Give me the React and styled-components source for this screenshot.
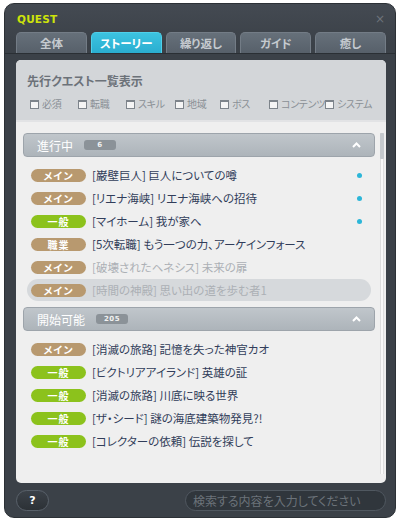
import React from "react";
import styled, { createGlobalStyle } from "styled-components";

const Global = createGlobalStyle`
  html, body { margin: 0; padding: 0; background: #ffffff; }
  body {
    font-family: "Noto Sans CJK JP", "Noto Sans", sans-serif;
    font-feature-settings: "palt";
  }
  * { box-sizing: border-box; }
`;

const Window = styled.div`
  margin: 3px 0 0 4px;
  width: 392px;
  height: 515px;
  border-radius: 10px;
  background: linear-gradient(#444a52, #3b4148 40px, #3b4148);
  border: 1px solid #2c3136;
  display: flex;
  flex-direction: column;
  overflow: hidden;
`;

const TitleBar = styled.div`
  height: 28px;
  display: flex;
  align-items: center;
  justify-content: space-between;
  padding: 2px 10px 0 12px;
`;

const Title = styled.div`
  font-family: "DejaVu Sans", Verdana, sans-serif;
  font-weight: bold;
  font-size: 10.5px;
  color: #cde30a;
  letter-spacing: 0.2px;
`;

const Close = styled.div`
  font-family: "DejaVu Sans", sans-serif;
  font-size: 12px;
  color: #6e747b;
  line-height: 1;
`;

const Tabs = styled.div`
  display: flex;
  gap: 4px;
  padding: 0 9px 0 11px;
  height: 22px;
  border-bottom: 1px solid #2a2f34;
`;

const Tab = styled.div`
  flex: 1;
  height: 21px;
  border-radius: 5px 5px 0 0;
  display: flex;
  align-items: center;
  justify-content: center;
  font-size: 11.5px;
  font-weight: bold;
  color: ${(p) => (p.$active ? "#ffffff" : "#c5cacf")};
  background: ${(p) =>
    p.$active
      ? "linear-gradient(#3cc3e0, #2aaed0)"
      : "linear-gradient(#66707a, #57606a)"};
  border: 1px solid ${(p) => (p.$active ? "#4fd0ea" : "#737c86")};
  border-bottom: none;
`;

const Panel = styled.div`
  margin: 6px 9px 0 11px;
  height: 423px;
  border-radius: 5px;
  overflow: hidden;
  display: flex;
  flex-direction: column;
  background: #efefef;
`;

const Filter = styled.div`
  height: 62px;
  background: #d3d6d9;
  padding: 13px 0 0 11px;
  border-bottom: 2px solid #e2e3e5;
`;

const FilterTitle = styled.div`
  font-size: 12px;
  font-weight: bold;
  color: #6c7279;
  line-height: 16px;
`;

const Checks = styled.div`
  display: flex;
  margin-top: 8px;
  padding-left: 3px;
`;

const CheckItem = styled.label`
  width: ${(p) => p.$w}px;
  flex: none;
  display: flex;
  align-items: center;
  gap: 3px;
  font-size: 10px;
  letter-spacing: -0.3px;
  color: #8a9096;
  line-height: 14px;
  white-space: nowrap;
`;

const Box = styled.span`
  width: 9px;
  height: 9px;
  flex: none;
  border: 1px solid #7d848b;
  border-top-width: 2px;
  background: #f5f5f5;
`;

const List = styled.div`
  flex: 1;
  display: flex;
  min-height: 0;
`;

const ListContent = styled.div`
  flex: 1;
  padding: 11px 0 0 7px;
  overflow: hidden;
`;

const Track = styled.div`
  width: 4px;
  margin: 11px 2px 9px 5px;
  background: #f9f9f9;
  border-left: 1px solid #dedede;
  border-right: 1px solid #dedede;
  position: relative;
`;

const Thumb = styled.div`
  position: absolute;
  left: -1px;
  right: -1px;
  top: 0;
  height: 26px;
  background: #c5c9cd;
  border-radius: 1px;
`;

const SectionHeader = styled.div`
  height: 24px;
  margin: ${(p) => (p.$first ? "0" : "6px")} 0 7px 0;
  border-radius: 4px;
  border: 1px solid #9da4ab;
  background: linear-gradient(#c0c6cb, #adb4ba);
  display: flex;
  align-items: center;
  gap: 11px;
  padding: 0 13px 0 13px;
`;

const SectionName = styled.span`
  font-size: 12px;
  color: #ffffff;
  white-space: nowrap;
`;

const Badge = styled.span`
  width: 32px;
  height: 10px;
  border-radius: 3px;
  background: #8b9298;
  color: #f2f2f2;
  font-family: "DejaVu Sans", sans-serif;
  font-weight: bold;
  font-size: 7px;
  line-height: 10px;
  text-align: center;
  letter-spacing: 0.5px;
`;

const Chevron = styled.svg`
  margin-left: auto;
`;

const Row = styled.div`
  height: 22px;
  margin: 1px 4px;
  border-radius: 11px;
  background: ${(p) => (p.$hl ? "#d6d9dc" : "transparent")};
  display: flex;
  align-items: center;
  padding: 0 9px 0 4px;
`;

const Pill = styled.span`
  width: 55px;
  height: 13px;
  flex: none;
  border-radius: 7px;
  background: ${(p) => (p.$kind === "green" ? "#8cc21c" : "#b8996f")};
  color: #ffffff;
  font-size: 10px;
  font-weight: bold;
  line-height: 13px;
  text-align: center;
  letter-spacing: 1px;
`;

const RowText = styled.span`
  margin-left: 6px;
  font-size: 11.5px;
  color: ${(p) => (p.$dim ? "#acb0b5" : "#313d5a")};
  white-space: nowrap;
  flex: 1;
  overflow: hidden;
`;

const Dot = styled.span`
  width: 5px;
  height: 5px;
  border-radius: 50%;
  background: #2cb6d8;
  flex: none;
`;

const Footer = styled.div`
  display: flex;
  justify-content: space-between;
  align-items: center;
  margin: 7px 9px 0 11px;
  height: 21px;
`;

const HelpButton = styled.div`
  width: 33px;
  height: 21px;
  border-radius: 11px;
  background: linear-gradient(#3b4148, #2c3136);
  border: 1px solid #59616a;
  color: #ffffff;
  font-family: "DejaVu Sans", sans-serif;
  font-weight: bold;
  font-size: 11px;
  display: flex;
  align-items: center;
  justify-content: center;
`;

const Search = styled.input`
  width: 201px;
  height: 21px;
  border-radius: 11px;
  background: #30363c;
  border: 1px solid #505860;
  padding: 0 0 0 7px;
  font-family: "Noto Sans CJK JP", sans-serif;
  font-feature-settings: "palt";
  font-size: 12px;
  color: #cfd3d6;
  outline: none;
  &::placeholder {
    color: #6c737a;
  }
`;

const filters = [
  ["必須", 48],
  ["転職", 48],
  ["スキル", 49],
  ["地域", 45],
  ["ボス", 49],
  ["コンテンツ", 56],
  ["システム", 70],
];

const sections = [
  {
    name: "進行中",
    count: "6",
    rows: [
      { tag: "メイン", kind: "tan", text: "[巌壁巨人] 巨人についての噂", dot: true },
      { tag: "メイン", kind: "tan", text: "[リエナ海峡] リエナ海峡への招待", dot: true },
      { tag: "一般", kind: "green", text: "[マイホーム] 我が家へ", dot: true },
      { tag: "職業", kind: "tan", text: "[5次転職] もう一つの力、アーケインフォース" },
      { tag: "メイン", kind: "tan", text: "[破壊されたヘネシス] 未来の扉", dim: true },
      { tag: "メイン", kind: "tan", text: "[時間の神殿] 思い出の道を歩む者1", dim: true, hl: true },
    ],
  },
  {
    name: "開始可能",
    count: "205",
    rows: [
      { tag: "メイン", kind: "tan", text: "[消滅の旅路] 記憶を失った神官カオ" },
      { tag: "一般", kind: "green", text: "[ビクトリアアイランド] 英雄の証" },
      { tag: "一般", kind: "green", text: "[消滅の旅路] 川底に映る世界" },
      { tag: "一般", kind: "green", text: "[ザ・シード] 謎の海底建築物発見?!" },
      { tag: "一般", kind: "green", text: "[コレクターの依頼] 伝説を探して" },
    ],
  },
];

const tabs = ["全体", "ストーリー", "繰り返し", "ガイド", "癒し"];

export default function App() {
  return (
    <>
      <Global />
      <Window>
        <TitleBar>
          <Title>QUEST</Title>
          <Close>×</Close>
        </TitleBar>
        <Tabs>
          {tabs.map((t, i) => (
            <Tab key={t} $active={i === 1}>
              {t}
            </Tab>
          ))}
        </Tabs>
        <Panel>
          <Filter>
            <FilterTitle>先行クエスト一覧表示</FilterTitle>
            <Checks>
              {filters.map(([label, w]) => (
                <CheckItem key={label} $w={w}>
                  <Box />
                  {label}
                </CheckItem>
              ))}
            </Checks>
          </Filter>
          <List>
            <ListContent>
              {sections.map((s, si) => (
                <React.Fragment key={s.name}>
                  <SectionHeader $first={si === 0}>
                    <SectionName>{s.name}</SectionName>
                    <Badge>{s.count}</Badge>
                    <Chevron width="9" height="6" viewBox="0 0 9 6">
                      <polyline
                        points="1,5 4.5,1.5 8,5"
                        fill="none"
                        stroke="#ffffff"
                        strokeWidth="2"
                      />
                    </Chevron>
                  </SectionHeader>
                  {s.rows.map((r, ri) => (
                    <Row key={ri} $hl={r.hl}>
                      <Pill $kind={r.kind}>{r.tag}</Pill>
                      <RowText $dim={r.dim}>{r.text}</RowText>
                      {r.dot && <Dot />}
                    </Row>
                  ))}
                </React.Fragment>
              ))}
            </ListContent>
            <Track>
              <Thumb />
            </Track>
          </List>
        </Panel>
        <Footer>
          <HelpButton>?</HelpButton>
          <Search placeholder="検索する内容を入力してください" />
        </Footer>
      </Window>
    </>
  );
}
